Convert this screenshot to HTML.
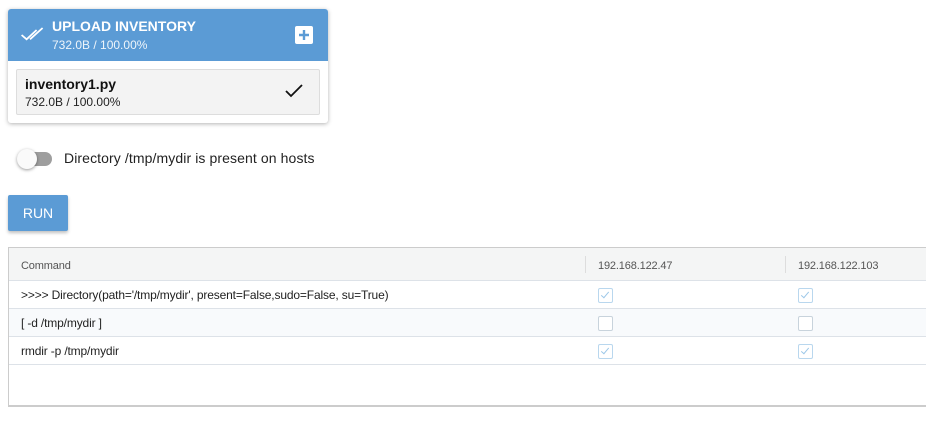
<!DOCTYPE html>
<html><head><style>
body{margin:0;width:926px;height:421px;background:#fff;font-family:"Liberation Sans",Arial,sans-serif;position:relative;overflow:hidden;color:#222}
.card{position:absolute;left:8px;top:9px;width:320px;height:114px;background:#fff;border-radius:3px;box-shadow:0 1px 4px rgba(0,0,0,.3);overflow:hidden}
.hd{height:52px;background:#5b9bd5;color:#fff;position:relative}
.t1{position:absolute;left:44px;top:9px;font-size:14px;font-weight:bold}
.t2{position:absolute;left:44px;top:29px;font-size:12px;opacity:.9}
.plus{position:absolute;right:15px;top:17px;width:18px;height:18px;background:#fff;border-radius:2px}
.item{position:absolute;left:8px;top:60px;width:302px;height:44px;background:#f3f3f3;border:1px solid #ddd;border-radius:2px}
.tog{position:absolute;left:18px;top:152px;width:34px;height:14px;border-radius:7px;background:#9e9e9e}
.knob{position:absolute;left:17px;top:149px;width:20px;height:20px;border-radius:50%;background:#fafafa;box-shadow:0 1px 3px rgba(0,0,0,.4)}
.run{position:absolute;left:8px;top:195px;width:60px;height:36px;background:#5b9bd5;color:#fff;font-size:14px;border-radius:2px;box-shadow:0 2px 3px rgba(0,0,0,.25);text-align:center;line-height:36px}
.tbl{position:absolute;left:8px;top:247px;width:930px;height:157px;border:1px solid #ccc;border-bottom:2px solid #ccc}
.row{position:absolute;left:0;width:930px;border-bottom:1px solid #dde2e8;font-size:12px;letter-spacing:-0.15px}
.cb{position:absolute;width:13px;height:13px;border:1px solid #c8d3dc;border-radius:2px;background:#fff}
.cb.c{border-color:#b9d7ee}
.cb.c:after{content:"";position:absolute;left:4px;top:1px;width:3px;height:7px;border:solid #9cc7e8;border-width:0 1px 1px 0;transform:rotate(40deg)}
</style></head><body>
<div class="card">
 <div class="hd">
  <svg style="position:absolute;left:0;top:0" width="44" height="52"><path d="M13.6 26L18.6 30.3L28.6 21M22 30.3L34.6 19" stroke="#fff" stroke-width="1.8" fill="none"/></svg>
  <div class="t1">UPLOAD INVENTORY</div>
  <div class="t2">732.0B / 100.00%</div>
  <div class="plus"><svg width="18" height="18"><path d="M9 4v10M4 9h10" stroke="#5b9bd5" stroke-width="2.4"/></svg></div>
 </div>
 <div class="item">
  <div style="position:absolute;left:8px;top:6px;font-size:14px;font-weight:bold;color:#111">inventory1.py</div>
  <div style="position:absolute;left:8px;top:25px;font-size:12px;color:#222">732.0B / 100.00%</div>
  <svg style="position:absolute;left:268px;top:14px" width="18" height="14"><path d="M1 7l5 5L17 1" stroke="#111" stroke-width="1.8" fill="none"/></svg>
 </div>
</div>
<div class="tog"></div><div class="knob"></div>
<div style="position:absolute;left:64px;top:150px;font-size:14px;color:#222;letter-spacing:0.1px">Directory /tmp/mydir is present on hosts</div>
<div class="run">RUN</div>
<div class="tbl">
 <div class="row" style="top:0;height:32px;background:#f4f5f5;color:#555;font-size:11px">
  <span style="position:absolute;left:12px;top:12px">Command</span>
  <span style="position:absolute;left:576px;top:8px;height:17px;border-left:1px solid #ddd"></span>
  <span style="position:absolute;left:589px;top:12px">192.168.122.47</span>
  <span style="position:absolute;left:776px;top:8px;height:17px;border-left:1px solid #ddd"></span>
  <span style="position:absolute;left:789px;top:12px">192.168.122.103</span>
 </div>
 <div class="row" style="top:33px;height:27px"><span style="position:absolute;left:12px;top:7px">&gt;&gt;&gt;&gt; Directory(path='/tmp/mydir', present=False,sudo=False, su=True)</span><div class="cb c" style="left:589px;top:7px"></div><div class="cb c" style="left:789px;top:7px"></div></div>
 <div class="row" style="top:61px;height:27px;background:#f8fafc"><span style="position:absolute;left:12px;top:7px">[ -d /tmp/mydir ]</span><div class="cb" style="left:589px;top:7px"></div><div class="cb" style="left:789px;top:7px"></div></div>
 <div class="row" style="top:89px;height:27px"><span style="position:absolute;left:12px;top:7px">rmdir -p /tmp/mydir</span><div class="cb c" style="left:589px;top:7px"></div><div class="cb c" style="left:789px;top:7px"></div></div>
</div>
</body></html>
